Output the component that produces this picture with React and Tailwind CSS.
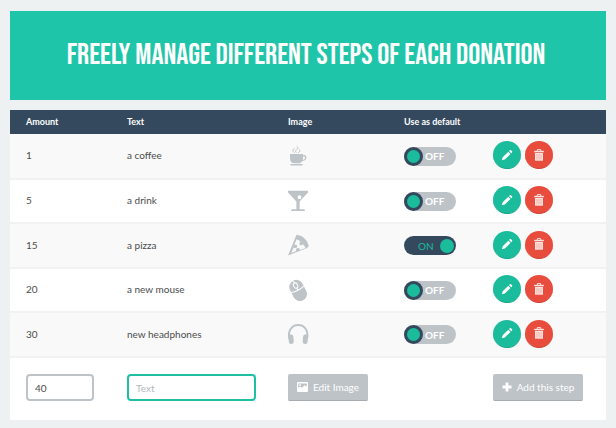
import { useState } from 'react'

const TEXT = "font-['Lato','Open_Sans',sans-serif]"

function CoffeeIcon() {
  return (
    <svg viewBox="0 0 22 22" className="size-[22px]" fill="#bdc3c7">
      <path d="M2 9h13v1.200c2-.6 3.400.5 3.400 2.300 0 2.300-1.800 3.500-4.100 3.500-.8 1.500-2 2.300-3.800 2.300H6.500C3.500 18.300 2 16.300 2 13.500zm13 2.600v1.900c0 .5-.1.900-.2 1.300 1.300-.1 2.200-.9 2.200-2.100 0-1-.8-1.500-2-1.100z" />
      <path d="M2.200 19h12.600c0 1-.8 1.600-2 1.600H4.200c-1.200 0-2-.6-2-1.600z" />
      <path d="M6.500 8C4.200 6.300 4.400 4 6.800 3.600M8.500 7.800c-1.900-1.600-.4-3 .8-3.800 1-.8.7-2.200-.6-2.600M10 7.800c2.400-1 2-2.600 1-3.400" fill="none" stroke="#bdc3c7" strokeWidth="1" />
    </svg>
  )
}

function DrinkIcon() {
  return (
    <svg viewBox="0 0 22 22" className="size-[22px]" fill="#bdc3c7">
      <path fillRule="evenodd" d="M0 .8h20v1.700L11.600 11.500v7.700H16c.6 0 .8.500.8 1.800H3.200c0-1.300.2-1.800.8-1.800h4.400v-7.700L0 2.500zM11.500 5.300a1.900 1.900 0 1 0 0 3.800 1.900 1.900 0 0 0 0-3.800z" />
    </svg>
  )
}

function PizzaIcon() {
  return (
    <svg viewBox="0 0 22 22" className="size-[22px]" fill="#bdc3c7">
      <path fillRule="evenodd" d="M8.500.8c5.800.6 10.800 4.800 12.300 11.200l-1.700 2L0 21.400zM8.600 5.200 6.300 11c1.700-.7 2.900.1 2.900 1.400 0 1.300-1.600 2-3.600 1.200L3.300 19l5-2c-.6-1.800.2-3 1.600-3s2.200.9 2 2.100l5.600-2.200c-.7-1.400-1.500-2.700-2.600-3.800-.6 1.700-2.900 1.600-3.400.1-.3-1.100.1-2.100 1.100-2.500-1.200-1.200-2.500-2.100-4-2.500z" />
    </svg>
  )
}

function MouseIcon() {
  return (
    <svg viewBox="0 0 22 22" className="size-[22px]">
      <g transform="rotate(-27 11 11)">
        <rect x="3" y="0" width="14" height="22" rx="7" fill="#bdc3c7" />
        <path d="M3 9.600c4 1.300 10 1.300 14 0M10 0v3M10 8v2.500" fill="none" stroke="#fff" strokeWidth="1" />
        <rect x="8.100" y="2.800" width="3.800" height="5.400" rx="1.900" fill="#bdc3c7" stroke="#fff" strokeWidth="1" />
      </g>
    </svg>
  )
}

function HeadphonesIcon() {
  return (
    <svg viewBox="0 0 22 22" className="size-[22px]" fill="#bdc3c7">
      <path d="M1.500 16C-.6 7.500 4 1.900 10.200 1.900S21 7.500 18.900 16" fill="none" stroke="#bdc3c7" strokeWidth="2" />
      <rect x="0.600" y="11.500" width="4.900" height="9.500" rx="2.300" transform="rotate(-5 3 16)" />
      <rect x="14.900" y="11.500" width="4.900" height="9.500" rx="2.300" transform="rotate(5 17 16)" />
    </svg>
  )
}

function PencilIcon() {
  return (
    <svg viewBox="0 0 12 12" className="size-3" fill="#fff">
      <path d="M.8 11.300l.9-3L7.300 2.700l2.200 2.200L3.800 10.500zM8 2l.8-.8c.4-.4.800-.4 1.200 0l1 1c.4.400.4.800 0 1.200l-.8.800z" />
    </svg>
  )
}

function TrashIcon() {
  return (
    <svg viewBox="0 0 12 12" className="size-3">
      <path d="M4.300 2V.6h3.400V2" fill="none" stroke="#fbe3e0" />
      <path d="M1.200 1.800h9.600v1.500H1.200z" fill="#fbe3e0" />
      <path d="M2 4h8v7.700H2z" fill="#fbe3e0" />
      <path d="M4 5v5.600M6 5v5.600M8 5v5.600" stroke="#f2aaa0" strokeWidth="0.900" />
    </svg>
  )
}

function PictureIcon() {
  return (
    <svg viewBox="0 0 11 10" className="h-[10px] w-[11px]">
      <rect width="11" height="10" rx="1" fill="#fff" />
      <path d="M1.200 5.800V1.600h8.600v3L7.500 3.300 5 5.800 3.500 4.500z" fill="#bdc3c7" />
      <circle cx="3" cy="3" r="0.900" fill="#fff" />
    </svg>
  )
}

function PlusIcon() {
  return (
    <svg viewBox="0 0 10 10" className="size-[10px]" fill="#fff">
      <path d="M3.600.5h2.800v3.100h3.100v2.800H6.400v3.100H3.600V6.400H.5V3.600h3.100z" />
    </svg>
  )
}

function Toggle({ checked, label, onChange }) {
  return (
    <label
      className={`relative flex h-[19px] w-[52px] items-center rounded-full text-[10px] leading-none ${
        checked ? 'bg-[#34495e] text-[#1abc9c]' : 'bg-[#bdc3c7] font-bold text-white'
      }`}
    >
      <input
        type="checkbox"
        aria-label={label}
        checked={checked}
        onChange={onChange}
        className="absolute inset-0 cursor-pointer appearance-none"
      />
      {checked ? (
        <>
          <span className="flex-1 pl-[14px]">ON</span>
          <span className="mr-[2px] size-[14px] rounded-full bg-[#1abc9c]" />
        </>
      ) : (
        <>
          <span className="size-[19px] rounded-full border-3 border-[#34495e] bg-[#1abc9c]" />
          <span className="flex-1 pl-[2px]">OFF</span>
        </>
      )}
    </label>
  )
}

const steps = [
  { amount: 1, text: 'a coffee', Icon: CoffeeIcon },
  { amount: 5, text: 'a drink', Icon: DrinkIcon },
  { amount: 15, text: 'a pizza', Icon: PizzaIcon },
  { amount: 20, text: 'a new mouse', Icon: MouseIcon },
  { amount: 30, text: 'new headphones', Icon: HeadphonesIcon },
]

export default function App() {
  const [defaultAmount, setDefaultAmount] = useState(15)
  const [amount, setAmount] = useState('40')
  const [text, setText] = useState('')

  return (
    <div className={`min-h-screen bg-[#edf1f2] px-[10px] pt-[11px] pb-2 text-[10px] text-[#4c4c4c] ${TEXT}`}>
      <h1 className="flex h-[89px] items-center justify-center bg-[#1fc5a9] pr-1 font-['Bebas_Neue','Liberation_Sans_Narrow',sans-serif] text-[30px] font-normal whitespace-nowrap text-white uppercase">
        Freely manage different steps of each donation
      </h1>

      <table className="mt-[10px] w-full table-fixed border-collapse bg-white">
        <colgroup>
          <col className="w-[101px]" />
          <col className="w-[161px]" />
          <col className="w-[116px]" />
          <col className="w-[89px]" />
          <col />
        </colgroup>
        <thead>
          <tr className="h-6 bg-[#34495e] text-left text-[9px] text-white">
            <th className="pl-4">Amount</th>
            <th className="pl-4">Text</th>
            <th className="pl-4">Image</th>
            <th className="pl-4">Use as default</th>
            <th aria-label="Actions" />
          </tr>
        </thead>
        <tbody>
          {steps.map(({ amount: value, text: name, Icon }) => (
            <tr
              key={value}
              className="h-[45px] border-b-2 border-[#f2f2f2] odd:bg-[#f9f9f9] even:h-[44px] even:bg-white"
            >
              <td className="pb-px pl-4">{value}</td>
              <td className="pb-px pl-4">{name}</td>
              <td className="pb-px pl-4">
                <Icon />
              </td>
              <td className="pl-4">
                <Toggle
                  label={`Use ${name} as default`}
                  checked={value === defaultAmount}
                  onChange={() => setDefaultAmount(value)}
                />
              </td>
              <td className="pb-[2px] pl-4">
                <div className="flex gap-1">
                  <button
                    type="button"
                    aria-label={`Edit ${name}`}
                    className="flex size-7 items-center justify-center rounded-full border-b border-[#17a689] bg-[#1abc9c]"
                  >
                    <PencilIcon />
                  </button>
                  <button
                    type="button"
                    aria-label={`Delete ${name}`}
                    className="flex size-7 items-center justify-center rounded-full border-b border-[#cf4436] bg-[#e74c3c]"
                  >
                    <TrashIcon />
                  </button>
                </div>
              </td>
            </tr>
          ))}
        </tbody>
        <tfoot>
          <tr className="h-[63px] bg-white">
            <td className="pb-[3px] pl-4">
              <input
                type="text"
                aria-label="Amount"
                value={amount}
                onChange={(e) => setAmount(e.target.value)}
                className="block h-[27px] w-[68px] rounded border-2 border-[#bdc3c7] px-[7px] outline-none"
              />
            </td>
            <td className="pb-[3px] pl-4">
              <input
                type="text"
                aria-label="Text"
                placeholder="Text"
                value={text}
                onChange={(e) => setText(e.target.value)}
                className="block h-[27px] w-[129px] rounded border-2 border-[#1fc0a2] px-[7px] outline-none placeholder:text-[#b2b9be]"
              />
            </td>
            <td className="pb-[3px] pl-4">
              <button
                type="button"
                className="flex h-[27px] w-20 items-center justify-center gap-[5px] rounded-xs border-b border-[#a5abaf] bg-[#bdc3c7] whitespace-nowrap text-white"
              >
                <PictureIcon />
                Edit Image
              </button>
            </td>
            <td />
            <td className="pb-[3px] pl-4">
              <button
                type="button"
                className="flex h-[27px] w-[90px] items-center justify-center gap-[5px] rounded-xs border-b border-[#a5abaf] bg-[#bdc3c7] whitespace-nowrap text-white"
              >
                <PlusIcon />
                Add this step
              </button>
            </td>
          </tr>
        </tfoot>
      </table>
    </div>
  )
}
